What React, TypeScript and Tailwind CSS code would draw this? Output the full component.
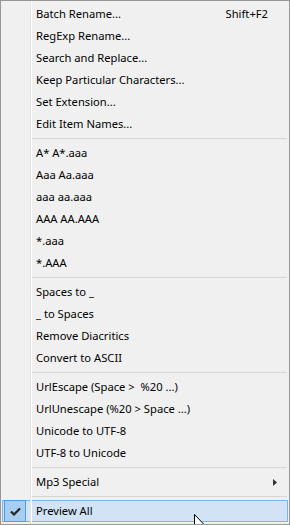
import React from "react";

type Item = { label: string; shortcut?: string; submenu?: boolean; checked?: boolean; active?: boolean };

const groups: Item[][] = [
  [
    { label: "Batch Rename...", shortcut: "Shift+F2" },
    { label: "RegExp Rename..." },
    { label: "Search and Replace..." },
    { label: "Keep Particular Characters..." },
    { label: "Set Extension..." },
    { label: "Edit Item Names..." },
  ],
  [
    { label: "A* A*.aaa" },
    { label: "Aaa Aa.aaa" },
    { label: "aaa aa.aaa" },
    { label: "AAA AA.AAA" },
    { label: "*.aaa" },
    { label: "*.AAA" },
  ],
  [
    { label: "Spaces to _" },
    { label: "_ to Spaces" },
    { label: "Remove Diacritics" },
    { label: "Convert to ASCII" },
  ],
  [
    { label: "UrlEscape (Space >  %20 ...)" },
    { label: "UrlUnescape (%20 > Space ...)" },
    { label: "Unicode to UTF-8" },
    { label: "UTF-8 to Unicode" },
  ],
  [{ label: "Mp3 Special", submenu: true }],
  [{ label: "Preview All", checked: true, active: true }],
];

function MenuRow({ item }: { item: Item }) {
  return (
    <div
      className={`mx-px flex h-[22px] items-center ${
        item.active ? "border border-[#7eb4ea] bg-[#d1e3f5]" : "border border-transparent"
      }`}
    >
      <div className="flex h-full w-[28px] shrink-0 items-center">
        {item.checked && (
          <div className="ml-px -my-px flex h-[22px] w-[22px] items-center justify-center border border-[#4c9de6] bg-[#a8cdf0]">
            <svg width="11" height="9" viewBox="0 0 11 9">
              <path d="M1 4.5 L4 7.5 L10 1.5" fill="none" stroke="#262626" strokeWidth="2.2" />
            </svg>
          </div>
        )}
      </div>
      <div className="flex-1 whitespace-pre pl-[5px] text-[11.2px] text-black">{item.label}</div>
      {item.shortcut && <div className="pr-[19px] text-[11.2px] text-black">{item.shortcut}</div>}
      {item.submenu && (
        <div className="pr-[10px]">
          <svg width="4" height="7" viewBox="0 0 4 7">
            <path d="M0 0 L4 3.5 L0 7 Z" fill="#333" />
          </svg>
        </div>
      )}
    </div>
  );
}

export default function App() {
  return (
    <div
      className="relative h-[525px] w-[290px] overflow-hidden border border-[#979797] bg-[#f0f0f0] pt-[2px]"
      style={{ fontFamily: '"Noto Sans", sans-serif' }}
    >
      <div className="pointer-events-none absolute bottom-0 left-[29px] top-0 w-px bg-[#e2e2e2]" />
      <div className="pointer-events-none absolute bottom-0 left-[30px] top-0 w-px bg-white" />
      {groups.map((g, gi) => (
        <div key={gi}>
          {gi > 0 && (
            <div className="flex h-[7px] items-center pl-[29px] pr-[2px]">
              <div className="h-px flex-1 bg-[#d7d7d7]" />
            </div>
          )}
          {g.map((item) => (
            <MenuRow key={item.label} item={item} />
          ))}
        </div>
      ))}
      <svg className="absolute left-[193px] top-[513px]" width="12" height="19" viewBox="0 0 12 19">
        <path d="M0.5 0.5 L0.5 16 L4 12.5 L6.5 18 L8.5 17 L6 11.5 L11 11.5 Z" fill="white" stroke="black" strokeWidth="1" />
      </svg>
    </div>
  );
}
